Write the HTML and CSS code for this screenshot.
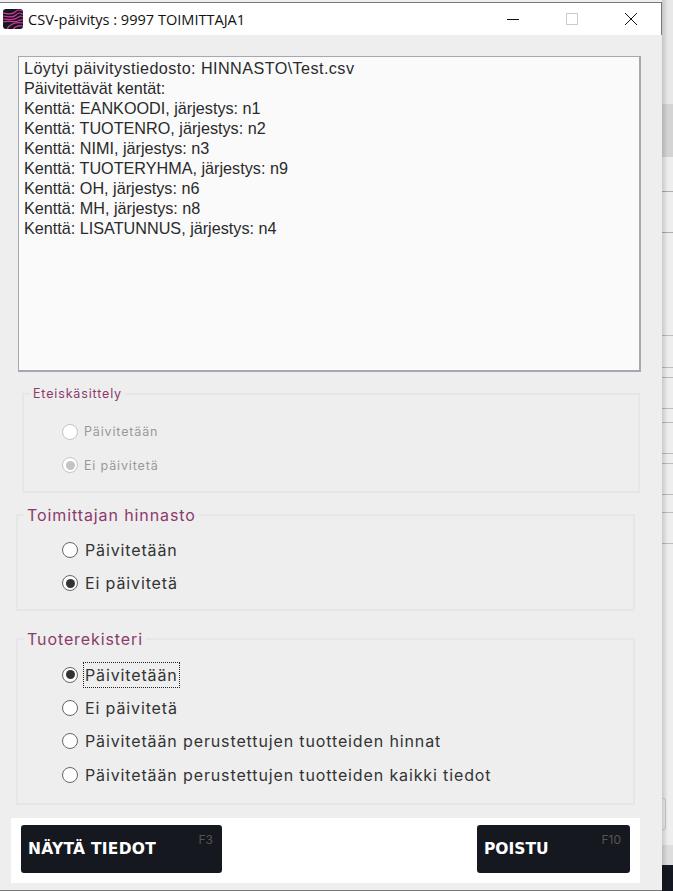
FILE: index.html
```html
<!DOCTYPE html>
<html lang="fi">
<head>
    <meta charset="UTF-8">
    <title>CSV-päivitys</title>
    <link rel="stylesheet" href="styles.css">
</head>
<body>

<div class="desktop">
    <div class="window">
        <div class="titlebar">
            <svg class="app-icon" width="20" height="20" viewBox="0 0 20 20">
                <rect width="20" height="20" rx="3" fill="#15171f"/>
                <path d="M0 4C5 5 9 6 12 3S17 1 20 2M0 7C5 8 10 9 13 6S17 4 20 5M0 10C5 10 10 12 14 9S18 7 20 8M0 13C5 11 11 14 15 12S18 11 20 11M4 20C7 15 13 13 20 14M10 20C12 18 16 16 20 17" fill="none" stroke="#cf3a98" stroke-width="1.2"/>
            </svg>
            <span class="title">CSV-päivitys : 9997 TOIMITTAJA1</span>
            <div class="win-buttons">
                <svg width="12" height="12" viewBox="0 0 12 12"><path d="M0 6.5H12" stroke="#111" stroke-width="1"/></svg>
                <svg width="12" height="12" viewBox="0 0 12 12"><rect x=".5" y=".5" width="11" height="11" fill="none" stroke="#ccc"/></svg>
                <svg width="12" height="12" viewBox="0 0 12 12"><path d="M0 0L12 12M12 0L0 12" stroke="#111" stroke-width="1"/></svg>
            </div>
        </div>

        <div class="content">
            <div class="log">
                <div class="log-first">Löytyi päivitystiedosto: HINNASTO\Test.csv</div>
                <div>Päivitettävät kentät:</div>
                <div>Kenttä: EANKOODI, järjestys: n1</div>
                <div>Kenttä: TUOTENRO, järjestys: n2</div>
                <div>Kenttä: NIMI, järjestys: n3</div>
                <div>Kenttä: TUOTERYHMA, järjestys: n9</div>
                <div>Kenttä: OH, järjestys: n6</div>
                <div>Kenttä: MH, järjestys: n8</div>
                <div>Kenttä: LISATUNNUS, järjestys: n4</div>
            </div>

            <fieldset class="group group-small disabled">
                <legend>Eteiskäsittely</legend>
                <div class="option"><span class="radio"></span><span>Päivitetään</span></div>
                <div class="option"><span class="radio checked"></span><span>Ei päivitetä</span></div>
            </fieldset>

            <fieldset class="group group-supplier">
                <legend>Toimittajan hinnasto</legend>
                <div class="option"><span class="radio"></span><span>Päivitetään</span></div>
                <div class="option"><span class="radio checked"></span><span>Ei päivitetä</span></div>
            </fieldset>

            <fieldset class="group group-products">
                <legend>Tuoterekisteri</legend>
                <div class="option"><span class="radio checked"></span><span class="focused">Päivitetään</span></div>
                <div class="option"><span class="radio"></span><span>Ei päivitetä</span></div>
                <div class="option"><span class="radio"></span><span>Päivitetään perustettujen tuotteiden hinnat</span></div>
                <div class="option"><span class="radio"></span><span>Päivitetään perustettujen tuotteiden kaikki tiedot</span></div>
            </fieldset>

            <div class="footer">
                <div class="btn btn-show"><span class="key">F3</span>NÄYTÄ TIEDOT</div>
                <div class="btn btn-exit"><span class="key">F10</span>POISTU</div>
            </div>
        </div>
    </div>
    <div class="behind"></div>
</div>

</body>
</html>
```

FILE: styles.css
```css
html, body { margin: 0; height: 100%; }
body { background: #e6e6e6; overflow: hidden; font-family: Inter, "Open Sans", sans-serif; }
.desktop { display: flex; height: 891px; }
.window { width: 662px; flex: none; display: flex; flex-direction: column; padding-top: 2px; box-sizing: border-box; background: #eee; border-bottom: 1px solid #777; }

/* the other window showing behind this one */
.behind {
    flex: 1;
    position: relative;
    background:
        linear-gradient(to right, rgba(0, 0, 0, .15), rgba(0, 0, 0, 0) 6px),
        linear-gradient(to bottom,
            #e8e8e8 104px, #d4d4d4 104px, #d4d4d4 157px, #eee 157px,
            #eee 191px, #aaa 191px, #aaa 192px, #eee 192px,
            #eee 232px, #aaa 232px, #aaa 233px, #eee 233px,
            #eee 335px, #bbb 335px, #bbb 336px, #eee 336px,
            #eee 367px, #bbb 367px, #bbb 368px, #eee 368px,
            #eee 377px, #bbb 377px, #bbb 378px, #eee 378px,
            #eee 408px, #bbb 408px, #bbb 409px, #eee 409px,
            #eee 422px, #bbb 422px, #bbb 423px, #eee 423px,
            #eee 453px, #bbb 453px, #bbb 454px, #eee 454px,
            #eee 463px, #bbb 463px, #bbb 464px, #eee 464px,
            #eee 494px, #bbb 494px, #bbb 495px, #eee 495px,
            #eee 512px, #bbb 512px, #bbb 513px, #eee 513px,
            #eee 543px, #bbb 543px, #bbb 544px, #eee 544px,
            #eee 845px, #ddd 845px, #ddd 865px, #14171f 865px);
}
.behind::after { content: ""; position: absolute; left: 0; top: 798px; width: 3px; height: 30px; border: 1px solid #bbb; border-left: none; border-radius: 0 3px 3px 0; }

.titlebar { height: 33px; flex: none; display: flex; align-items: center; background: white; border-top: 1px solid #777; border-right: 1px solid #777; box-sizing: border-box; padding-left: 3px; }
.app-icon { flex: none; }
.title { margin-left: 5px; font: 14.55px "Open Sans", sans-serif; color: #111; }
.win-buttons { margin-left: auto; display: flex; align-items: center; gap: 47px; padding-right: 24px; }

.content { flex: 1; padding: 21px 21px 0 11px; display: flex; flex-direction: column; }
.log { height: 311px; margin-left: 7px; background: #fafafa; border: 1px solid #a5a8b3; border-width: 1px 2px 2px 1px; padding: 1px 5px; font: 16.2px/20px "Liberation Sans", Arial, sans-serif; color: #2a2a2a; }
.log-first { letter-spacing: .42px; }

.group { margin: 0; padding: 0; border: 2px solid #e6e6e6; box-sizing: border-box; min-width: 0; }
.group legend { margin-left: 6px; padding: 0 3px; color: #8c3a6c; }
.group-small { margin: 14px 1px 0 11px; height: 107px; padding-top: 13px; }
.group-small legend { font-size: 12.5px; line-height: 16px; letter-spacing: .85px; }
.group-supplier { margin: 13px 6px 0 5px; height: 105px; padding-top: 9px; }
.group-products { margin: 19px 6px 0 5px; height: 175px; padding-top: 10px; }
.group-supplier legend, .group-products legend { font-size: 16px; line-height: 18px; letter-spacing: .9px; }

.option { display: flex; align-items: center; height: 33.4px; margin-left: 44px; font-size: 16px; letter-spacing: .87px; color: #333; }
.radio { width: 16px; height: 16px; border-radius: 50%; border: 1.5px solid #666; background: white; box-sizing: border-box; margin-right: 7px; flex: none; position: relative; }
.radio.checked::after { content: ""; position: absolute; inset: 2.5px; border-radius: 50%; background: #333; }
.focused { outline: 1px dotted #222; line-height: 24px; padding: 0 1px; margin-left: -1px; }

.disabled .option { margin-left: 38px; font-size: 12.5px; letter-spacing: .85px; color: #999; }
.disabled .radio { border-color: #c4c4c4; margin-right: 6px; }
.disabled .radio.checked::after { background: #c4c4c4; }

.footer { margin: 13px 1px 0 0; height: 65px; background: white; display: flex; justify-content: space-between; padding: 7px 10px 0; box-sizing: border-box; }
.btn { position: relative; height: 48px; background: #15181f; border-radius: 3px; color: white; font: 700 15.5px "DejaVu Sans", sans-serif; display: flex; align-items: center; padding: 0 7px; box-sizing: border-box; }
.btn-show { width: 201px; letter-spacing: .25px; }
.btn-exit { width: 153px; }
.key { position: absolute; top: 7px; right: 9px; font: 400 12px Inter, sans-serif; letter-spacing: 0; color: #555; }
```
